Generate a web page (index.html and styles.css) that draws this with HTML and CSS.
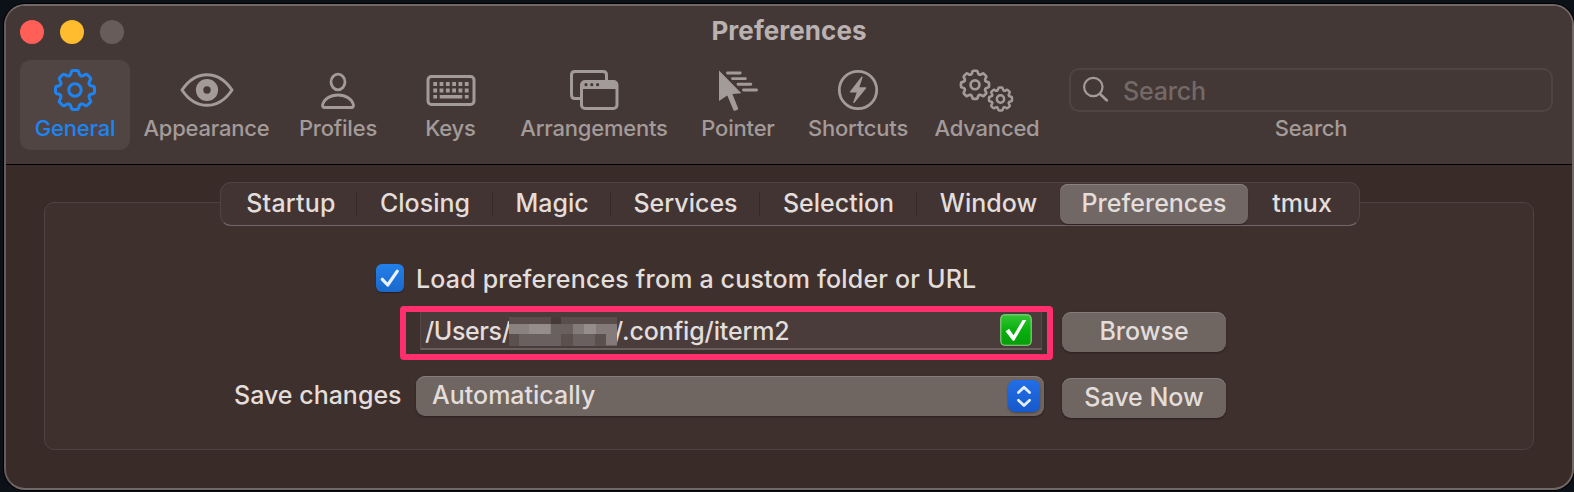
FILE: index.html
```html
<!DOCTYPE html>
<html lang="en">
<head>
<meta charset="utf-8">
<title>Preferences</title>
<link rel="stylesheet" href="styles.css">
</head>
<body>
<svg width="0" height="0" class="defs">
  <defs>
    <path id="tooth" d="M-5.9 -14.2C-4.6 -14.8 -4.3 -15.2 -4.1 -16.4L-3.7 -18.2Q-3.4 -19.5 -2 -19.5H2Q3.4 -19.5 3.7 -18.2L4.1 -16.4C4.3 -15.2 4.6 -14.8 5.9 -14.2"/>
    <g id="gear">
      <use href="#tooth"/><use href="#tooth" transform="rotate(45)"/><use href="#tooth" transform="rotate(90)"/><use href="#tooth" transform="rotate(135)"/>
      <use href="#tooth" transform="rotate(180)"/><use href="#tooth" transform="rotate(225)"/><use href="#tooth" transform="rotate(270)"/><use href="#tooth" transform="rotate(315)"/>
      <circle r="6.2"/>
    </g>
  </defs>
</svg>
<div class="window">
  <header class="header">
    <div class="titlebar">
      <div class="lights"><i class="red"></i><i class="yellow"></i><i class="gray"></i></div>
      <h1 class="title"><span>Preferences</span></h1>
    </div>
    <nav class="toolbar">
      <div class="tool active">
        <svg class="icon" viewBox="-28 -22 56 44"><use href="#gear" stroke-width="3"/></svg>
        <span>General</span>
      </div>
      <div class="tool">
        <svg class="icon" viewBox="-28 -22 56 44"><path stroke-width="3" d="M-25 0C-19 -9 -10 -15.3 0 -15.3S19 -9 25 0C19 9 10 15.3 0 15.3S-19 9 -25 0Z"/><circle r="7.4" stroke-width="7.4"/></svg>
        <span>Appearance</span>
      </div>
      <div class="tool">
        <svg class="icon" viewBox="-28 -22 56 44"><ellipse cy="-8" rx="7" ry="7.8" stroke-width="2.8"/><path stroke-width="2.8" d="M-13.5 17.5Q-15.5 17.5 -15.5 15C-14 9 -8 5 0 5S14 9 15.5 15Q15.5 17.5 13.5 17.5Z"/></svg>
        <span>Profiles</span>
      </div>
      <div class="tool">
        <svg class="icon" viewBox="-28 -22 56 44"><rect x="-23" y="-13.5" width="46" height="28" rx="3.5" stroke-width="3"/><path stroke-width="3.8" stroke-linecap="butt" stroke-dasharray="3.8 2.5" d="M-17.7 -6H18M-17.7 .5H18"/><path stroke-width="3.6" stroke-linecap="butt" d="M-17.7 6.8h3.8M-11.3 6.8h22.6M13.8 6.8h3.8"/></svg>
        <span>Keys</span>
      </div>
      <div class="tool">
        <svg class="icon" viewBox="-28 -22 56 44"><path stroke-width="3" d="M-14.5 8.5H-19Q-22.5 8.5 -22.5 5V-15Q-22.5 -18.5 -19 -18.5H9Q12.5 -18.5 12.5 -15V-10"/><rect x="-12.5" y="-8.5" width="35.5" height="27" rx="3.5" stroke-width="3"/><path class="solid" d="M-12.5 -6Q-12.5 -9 -9 -9H20Q23 -9 23 -6V-1H-12.5Z"/><g class="hole"><circle cx="-8" cy="-5.3" r="1.6"/><circle cx="-2.2" cy="-5.3" r="1.6"/><circle cx="3.6" cy="-5.3" r="1.6"/></g></svg>
        <span>Arrangements</span>
      </div>
      <div class="tool">
        <svg class="icon" viewBox="-28 -22 56 44"><path class="solid" d="M-19 -19.4L3.4 3.3L-5.6 4L.2 18.6Q.3 20.2 -2.8 20.8L-4.4 20.4L-10.7 5.4L-19 11Z"/><path stroke-width="2.9" d="M-10.5 -17H2.2M-5.5 -11.4H7.4M0 -5.8H12.8M5.5 0H18.5"/></svg>
        <span>Pointer</span>
      </div>
      <div class="tool">
        <svg class="icon" viewBox="-28 -22 56 44"><circle r="18.7" stroke-width="2.8"/><path class="solid" d="M3.5 -13.2L-8.2 1.8Q-8.5 2.5 -7.8 2.6H-1.3L-4.8 12.2Q-4.7 13.6 -3.6 12.8L8.2 -1.8Q8.4 -2.6 7.7 -2.7H1.3L4.6 -12.4Q4.5 -13.8 3.5 -13.2Z"/></svg>
        <span>Shortcuts</span>
      </div>
      <div class="tool">
        <svg class="icon" viewBox="-28 -22 56 44"><use href="#gear" stroke-width="3.7" transform="translate(-12 -5.2) scale(.72)"/><use href="#gear" stroke-width="4.2" transform="translate(13.5 9) scale(.59)"/></svg>
        <span>Advanced</span>
      </div>
      <div class="search">
        <div class="field"><svg width="28" height="28" viewBox="0 0 28 28"><circle cx="11.3" cy="11" r="9.2" stroke-width="2.2"/><path stroke-width="2.8" d="M18 18L24.7 24.3"/></svg><span>Search</span></div>
        <span class="cap">Search</span>
      </div>
    </nav>
  </header>
  <main class="body">
    <section class="group">
      <div class="tabs">
        <div class="tab first"><span>Startup</span></div><div class="tab"><span>Closing</span></div><div class="tab"><span>Magic</span></div><div class="tab"><span>Services</span></div><div class="tab"><span>Selection</span></div><div class="tab last"><span>Window</span></div><div class="tab on"><span>Preferences</span></div><div class="tab last end"><span>tmux</span></div>
      </div>
      <div class="load">
        <svg class="check" width="28" height="28" viewBox="0 0 28 28"><path d="M6.3 15.3L11.7 21L21.3 7.2"/></svg>
        <span>Load preferences from a custom folder or URL</span>
      </div>
      <div class="row path-row">
        <div class="highlight">
          <div class="path"><span class="users">/Users/</span><svg class="mosaic" width="108" height="29" viewBox="0 0 108 29" shape-rendering="crispEdges"><path fill="#6a605f" d="M0 0h108v29H0z"/><path fill="#5a4e4d" d="M0 0h108v7H0z"/><path fill="#463a39" d="M42 0h10v7H42z"/><path fill="#8a8281" d="M0 7h42v10H0z"/><path fill="#958d8c" d="M20 7h21v10H20zM75 7h12v10H75z"/><path fill="#837a79" d="M64 7h11v10H64zM87 7h21v10H87zM97 17h11v11H97z"/><path fill="#5c504f" d="M0 17h10v12H0zM52 17h12v12H52zM86 17h11v12H86z"/></svg><span class="rest">/.config/iterm2</span>
            <svg class="ok" width="32" height="32" viewBox="0 0 32 32"><defs><linearGradient id="g" x2="0" y2="1"><stop stop-color="#35c536"/><stop offset=".5" stop-color="#08b00c"/><stop offset="1" stop-color="#079d0a"/></linearGradient></defs><rect x=".8" y=".8" width="30.4" height="30.4" rx="4" fill="url(#g)" stroke="#8ed78b" stroke-width="1.1"/><path fill="#fff" d="M5.5 17.2L9 14.8L13.5 21.2L22.6 6H26.3L14.2 26.8H12.8Z"/></svg>
          </div>
        </div>
        <div class="button"><span>Browse</span></div>
      </div>
      <div class="row save-row">
        <span class="label">Save changes</span>
        <div class="select"><span>Automatically</span><svg class="stepper" width="32" height="32" viewBox="0 0 32 32"><path d="M10.4 12.5L16 7.2L21.6 12.5M10.4 20.3L16 25.6L21.6 20.3"/></svg></div>
        <div class="button low"><span>Save Now</span></div>
      </div>
    </section>
  </main>
</div>
</body>
</html>
```
FILE: styles.css
```css
* { box-sizing: border-box; }
body { margin: 0; width: 1574px; height: 492px; overflow: hidden; background: #0b1116; padding: 4px 0 2px 4px; font-family: Inter, "Liberation Sans", sans-serif; font-size: 25px; font-weight: 500; color: #e3dddb; }
span { white-space: nowrap; }
.defs { position: absolute; }
.window { height: 486px; border-radius: 21px; border: 2px solid #716968; border-left-color: #655c5b; background: #382b28; box-shadow: 0 0 0 1px #000; overflow: hidden; }
.header { height: 159px; background: #443836; border-bottom: 1px solid #000; }
.titlebar { display: grid; grid-template-columns: 1fr auto 1fr; height: 54px; padding: 0 14px; }
.lights { display: flex; gap: 16px; padding-top: 14px; }
.lights i { width: 24px; height: 24px; border-radius: 50%; }
.red { background: #ff5f57; }
.yellow { background: #febc2e; }
.gray { background: #675c5b; }
.title { margin: 0; font-size: 26px; font-weight: 700; letter-spacing: .05px; line-height: 49px; color: #b9b2b0; }
.toolbar { display: grid; grid-template-columns: 110px 153px 110px 115px 172px 116px 124px 134px 499px; padding-left: 14px; font-size: 22px; letter-spacing: -.2px; color: #a39b99; }
.tool { height: 90px; display: flex; flex-direction: column; align-items: center; border-radius: 10px; padding-top: 8px; line-height: 28px; }
.active { background: #504543; color: #1e84f2; }
.icon { width: 56px; height: 44px; margin-bottom: 2px; fill: none; stroke: currentColor; stroke-linecap: round; stroke-linejoin: round; }
.icon .solid { fill: currentColor; stroke: none; }
.icon .hole { fill: #443836; stroke: none; }
.search { margin-left: 15px; width: 484px; padding-top: 8px; display: flex; flex-direction: column; align-items: center; }
.field { width: 484px; height: 44px; border: 2px solid #4f4442; border-radius: 10px; display: flex; align-items: center; gap: 13px; padding-left: 11px; font-size: 25px; color: #736967; }
.field span { padding-top: 2px; }
.field svg { fill: none; stroke: #a39b99; stroke-linecap: round; }
.cap { line-height: 28px; margin-top: 2px; }
.body { padding: 37px 38px 0; }
.group { height: 248px; border: 1px solid #4e4341; border-radius: 10px; background: #3e302d; }
.tabs { margin: -21px 0 0 175px; width: 1140px; height: 44px; border: 1px solid #4f4442; border-bottom-color: #72686a; border-radius: 11px; background: #413432; display: grid; grid-template-columns: 136px 136px 118px 149px 157px 143px 188px 111px; padding-top: 1px; line-height: 38px; }
.tab { height: 40px; text-align: center; position: relative; }
.tab:not(.last):not(.on)::after { content: ""; position: absolute; right: 0; top: 8px; width: 1px; height: 24px; background: #362a28; }
.first { padding-left: 4px; letter-spacing: .2px; }
.end { padding-right: 3px; }
.on { background: #716765; border-radius: 8px; box-shadow: inset 0 1px #8a8180, 0 1px 1px #2d2220; }
.load { display: flex; align-items: center; gap: 12px; margin: 36px 0 0 331px; height: 32px; letter-spacing: .18px; }
.load span { padding-top: 1px; }
.check { border-radius: 6px; background: linear-gradient(#2380ea, #1a68ca); fill: none; stroke: #eaf3ff; stroke-width: 3.2; stroke-linecap: round; stroke-linejoin: round; box-shadow: 0 1px 1px #2a1f1d; }
.row { display: flex; }
.path-row { margin: 12px 0 0 355px; gap: 9px; }
.highlight { width: 653px; height: 54px; border: 6px solid #ff2f6d; border-radius: 4px; padding-left: 14px; }
.path { width: 622px; height: 38px; border: solid #564a48; border-width: 0 1px 2px; border-bottom-color: #6a5f5e; background: #493c3a; display: flex; align-items: center; padding: 0 9px 0 4px; letter-spacing: -.3px; }
.path span { padding-top: 2px; }
.users { width: 84px; letter-spacing: -.4px; }
.rest { letter-spacing: -.15px; }
.mosaic { margin: 3px -3px 0 0; position: relative; }
.ok { margin-left: auto; }
.button { width: 164px; height: 40px; border-radius: 9px; background: #6f6561; box-shadow: inset 0 1px #857b78, 0 1px 2px #2b201e; text-align: center; line-height: 39px; margin-top: 6px; }
.save-row { margin: 16px 0 0 189px; }
.label { width: 167px; line-height: 38px; margin-right: 15px; }
.select { width: 628px; height: 40px; border-radius: 9px; background: #6f6561; box-shadow: inset 0 1px #857b78, 0 1px 2px #2b201e; display: flex; align-items: center; justify-content: space-between; padding: 0 4px 0 16px; line-height: 36px; margin-right: 18px; }
.select span { margin-top: -3px; }
.stepper { border-radius: 7px; background: linear-gradient(#226ee6, #1659cb); fill: none; stroke: #e3edff; stroke-width: 2.8; stroke-linecap: round; stroke-linejoin: round; box-shadow: 0 1px 2px #4b4441; }
.low { margin-top: 2px; }
```
